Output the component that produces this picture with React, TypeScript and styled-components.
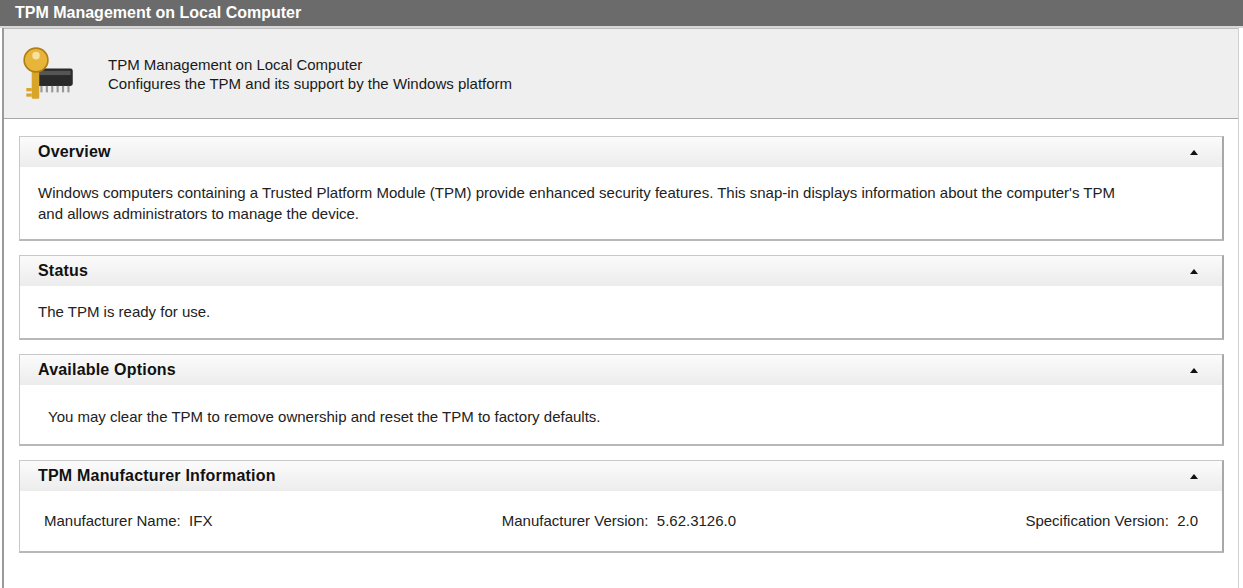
import React from "react";
import styled, { createGlobalStyle } from "styled-components";

const Global = createGlobalStyle`
  html, body { margin: 0; padding: 0; background: #fff; }
  body { font-family: "Liberation Sans", Arial, sans-serif; color: #1a1a1a; }
`;

const Page = styled.div`
  width: 1243px; height: 588px; display: flex; flex-direction: column; overflow: hidden;
`;
const TitleBar = styled.div`
  height: 26px; background: #6b6b6b; color: #fff; font-weight: bold; font-size: 16px;
  display: flex; align-items: center; padding-left: 15px; border-bottom: 2px solid #d8d8d8;
`;
const Frame = styled.div`
  flex: 1; margin-left: 2px; margin-right: 4px; border-left: 2px solid #9a9a9a; border-right: 1px solid #d0d0d0;
  display: flex; flex-direction: column;
`;
const Banner = styled.div`
  height: 89px; background: #efefef; border-bottom: 1px solid #a8a8a8; display: flex; align-items: center;
  padding-left: 18px; gap: 32px; font-size: 15px; line-height: 19px; border-top: 1px solid #bbb;
`;
const Sections = styled.div`
  display: flex; flex-direction: column; gap: 14px; padding: 17px 14px 0 15px;
`;
const Section = styled.div`
  border: 1px solid #c8c8c8; border-right: 2px solid #a8a8a8; border-bottom: 2px solid #b8b8b8;
`;
const Header = styled.div`
  height: 30px; background: linear-gradient(#fbfbfb, #ececec); display: flex; align-items: center;
  justify-content: space-between; padding: 0 24px 0 18px; font-weight: bold; font-size: 16px; color: #111;
  letter-spacing: 0.2px;
`;
const Caret = styled.span`
  width: 0; height: 0; border-left: 4px solid transparent; border-right: 4px solid transparent; border-bottom: 5px solid #111;
`;
const Body = styled.div<{ $pad: string; $h: number }>`
  padding: ${p => p.$pad}; min-height: ${p => p.$h}px; box-sizing: border-box; font-size: 15px; line-height: 21px; color: #222;
`;
const InfoRow = styled.div`
  display: flex; justify-content: space-between; padding-right: 12px;
`;

const Icon = () => (
  <svg width="54" height="54" viewBox="0 0 50 50">
    <rect x="14" y="20" width="33" height="16" rx="2" fill="#2a2a2a" />
    <rect x="16" y="22" width="29" height="4" fill="#555" />
    {[0,1,2,3,4,5].map(i => <rect key={i} x={17 + i * 5} y="36" width="2" height="6" fill="#999" />)}
    <rect x="9" y="16" width="7" height="32" rx="1" fill="#d9a42a" />
    <rect x="4" y="38" width="5" height="3" fill="#d9a42a" />
    <rect x="4" y="43" width="5" height="3" fill="#d9a42a" />
    <circle cx="13" cy="12" r="11" fill="#e7b53a" stroke="#b07d16" strokeWidth="1.5" />
    <circle cx="13" cy="8" r="3.5" fill="#f7e0a0" />
  </svg>
);

export default function App() {
  return (
    <Page>
      <Global />
      <TitleBar>TPM Management on Local Computer</TitleBar>
      <Frame>
        <Banner>
          <Icon />
          <div>TPM Management on Local Computer<br />Configures the TPM and its support by the Windows platform</div>
        </Banner>
        <Sections>
          <Section>
            <Header>Overview<Caret /></Header>
            <Body $pad="15px 80px 0 18px" $h={72}>Windows computers containing a Trusted Platform Module (TPM) provide enhanced security features. This snap-in displays information about the computer's TPM and allows administrators to manage the device.</Body>
          </Section>
          <Section>
            <Header>Status<Caret /></Header>
            <Body $pad="15px 18px 0" $h={52}>The TPM is ready for use.</Body>
          </Section>
          <Section>
            <Header>Available Options<Caret /></Header>
            <Body $pad="21px 28px 0" $h={59}>You may clear the TPM to remove ownership and reset the TPM to factory defaults.</Body>
          </Section>
          <Section>
            <Header>TPM Manufacturer Information<Caret /></Header>
            <Body $pad="19px 12px 0 24px" $h={60}>
              <InfoRow>
                <span>Manufacturer Name:&nbsp; IFX</span>
                <span>Manufacturer Version:&nbsp; 5.62.3126.0</span>
                <span>Specification Version:&nbsp; 2.0</span>
              </InfoRow>
            </Body>
          </Section>
        </Sections>
      </Frame>
    </Page>
  );
}
